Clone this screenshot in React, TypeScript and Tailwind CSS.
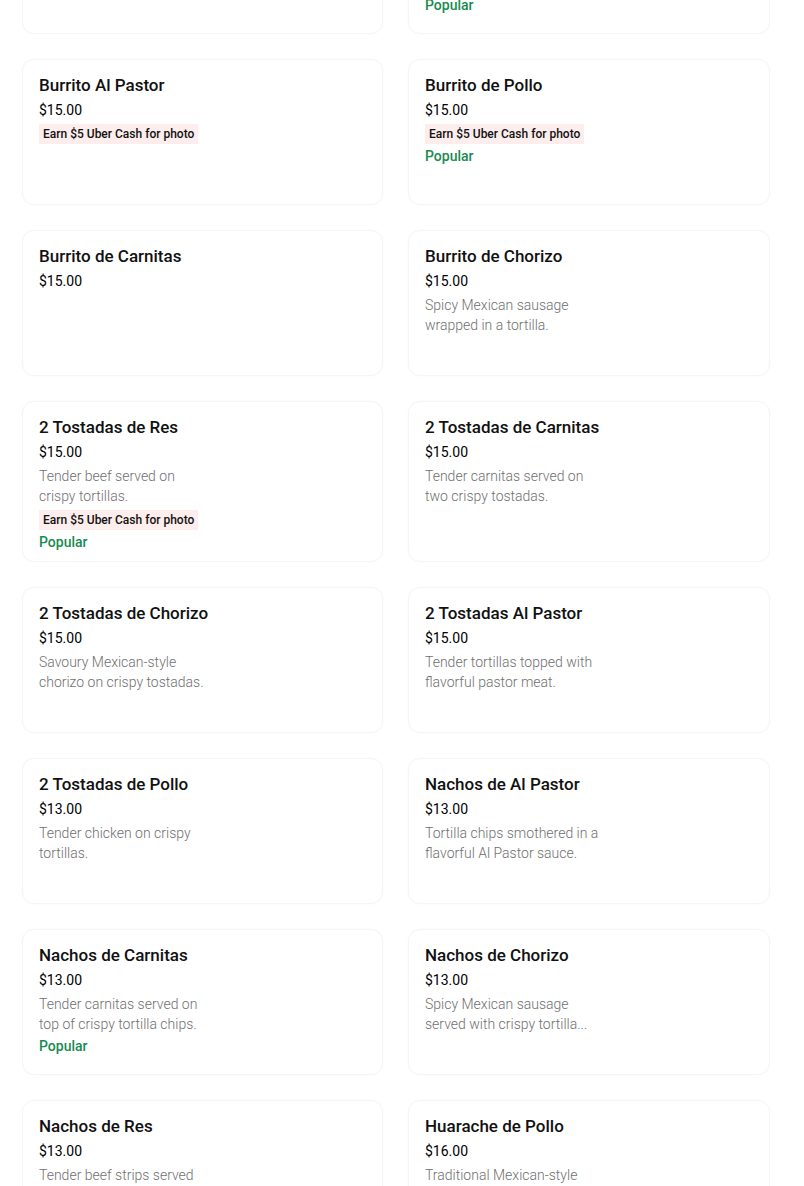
import React from 'react';

interface MenuItem {
    title: string;
    price: string;
    desc?: string[];
    badge?: boolean;
    popular?: boolean;
}

const rows: [MenuItem, MenuItem][] = [
    [
        { title: 'Burrito Al Pastor', price: '$15.00', badge: true },
        { title: 'Burrito de Pollo', price: '$15.00', badge: true, popular: true },
    ],
    [
        { title: 'Burrito de Carnitas', price: '$15.00' },
        { title: 'Burrito de Chorizo', price: '$15.00', desc: ['Spicy Mexican sausage', 'wrapped in a tortilla.'] },
    ],
    [
        { title: '2 Tostadas de Res', price: '$15.00', desc: ['Tender beef served on', 'crispy tortillas.'], badge: true, popular: true },
        { title: '2 Tostadas de Carnitas', price: '$15.00', desc: ['Tender carnitas served on', 'two crispy tostadas.'] },
    ],
    [
        { title: '2 Tostadas de Chorizo', price: '$15.00', desc: ['Savoury Mexican-style', 'chorizo on crispy tostadas.'] },
        { title: '2 Tostadas Al Pastor', price: '$15.00', desc: ['Tender tortillas topped with', 'flavorful pastor meat.'] },
    ],
    [
        { title: '2 Tostadas de Pollo', price: '$13.00', desc: ['Tender chicken on crispy', 'tortillas.'] },
        { title: 'Nachos de Al Pastor', price: '$13.00', desc: ['Tortilla chips smothered in a', 'flavorful Al Pastor sauce.'] },
    ],
    [
        { title: 'Nachos de Carnitas', price: '$13.00', desc: ['Tender carnitas served on', 'top of crispy tortilla chips.'], popular: true },
        { title: 'Nachos de Chorizo', price: '$13.00', desc: ['Spicy Mexican sausage', 'served with crispy tortilla...'] },
    ],
    [
        { title: 'Nachos de Res', price: '$13.00', desc: ['Tender beef strips served'] },
        { title: 'Huarache de Pollo', price: '$16.00', desc: ['Traditional Mexican-style'] },
    ],
];

const cardClass =
    'min-h-[146px] rounded-xl border border-[#f5f5f5] bg-white px-4 pt-[13px] pb-[9px] shadow-[0_0_3px_rgba(0,0,0,0.025)]';

const Popular = () => (
    <div className="text-[14px] leading-5 font-medium text-[#1a8a50]">Popular</div>
);

const MenuCard: React.FC<{ item: MenuItem }> = ({ item }) => (
    <div className={cardClass}>
        <div className="text-[17px] leading-6 font-medium text-[#111]">{item.title}</div>
        <div className="mt-[3px] text-[14px] leading-5 text-black">{item.price}</div>
        {item.desc && (
            <div className="mt-1 text-[14px] leading-5 font-light text-[#6f6f6f]">
                {item.desc.map((line) => (
                    <div key={line} className="whitespace-nowrap">{line}</div>
                ))}
            </div>
        )}
        {item.badge && (
            <div className="mt-1 flex">
                <span className="h-5 bg-[#fdeded] px-1 text-[12px] leading-5 font-medium text-[#111]">
                    Earn $5 Uber Cash for photo
                </span>
            </div>
        )}
        {item.popular && (
            <div className="mt-[2px]">
                <Popular />
            </div>
        )}
    </div>
);

export default function App() {
    return (
        <div className="h-[1186px] overflow-hidden bg-white font-['Roboto','Liberation_Sans',sans-serif]">
            <div className="-mt-[112px] ml-[22px] grid w-[748px] grid-cols-[361px_362px] gap-[25px]">
                {/* previous row, scrolled mostly out of view */}
                <div className={cardClass} />
                <div className={cardClass}>
                    <div className="h-[93px]" />
                    <Popular />
                </div>
                {rows.map(([a, b]) => (
                    <React.Fragment key={a.title}>
                        <MenuCard item={a} />
                        <MenuCard item={b} />
                    </React.Fragment>
                ))}
            </div>
        </div>
    );
}
